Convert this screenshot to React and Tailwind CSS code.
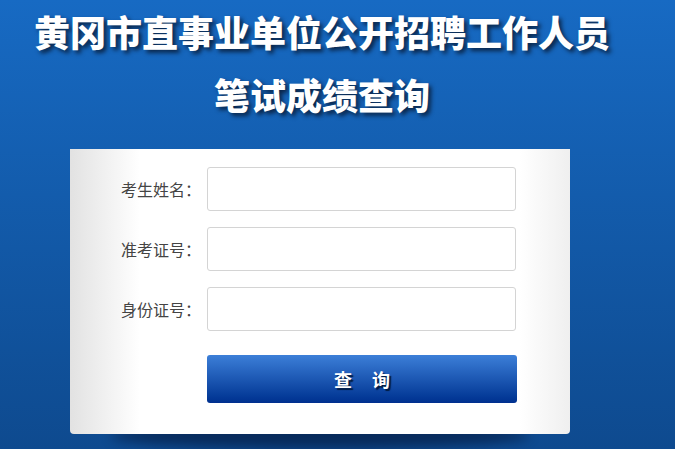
import React from 'react';

const fields = ['考生姓名：', '准考证号：', '身份证号：'];

export default function App() {
  return (
    <div
      className="relative w-[675px] h-[449px] overflow-hidden bg-gradient-to-b from-[#176ac3] to-[#0e4a8f]"
      style={{ fontFamily: '"Noto Sans CJK SC", "Noto Sans", sans-serif' }}
    >
      {/* heading */}
      <div className="w-[644px] pt-0 text-center text-white font-black text-[36px] leading-[63px] [text-shadow:3px_3px_4px_#0a2548]">
        <h1>黄冈市直事业单位公开招聘工作人员</h1>
        <h2>笔试成绩查询</h2>
      </div>

      {/* card */}
      <div className="relative ml-[70px] mt-[23px] w-[500px]">
        <div className="absolute left-[40px] right-[40px] -bottom-[14px] h-[24px] rounded-[50%] bg-[#06224d] blur-[6px] opacity-80" />
        <div className="relative h-[285px] rounded-b-[4px] bg-[linear-gradient(to_right,#e2e2e2,#ffffff_14%,#ffffff_90%,#efefef)] pt-[18px]">
          <div className="flex flex-col gap-[16px]">
            {fields.map((f) => (
              <div key={f} className="flex items-center">
                <label className="w-[137px] pr-[6px] text-right text-[16px] text-[#444]">{f}</label>
                <input className="w-[309px] h-[44px] rounded-[3px] border border-[#d4d4d4] bg-white outline-none" />
              </div>
            ))}
          </div>
          <button className="ml-[137px] mt-[24px] w-[310px] h-[48px] rounded-[3px] bg-gradient-to-b from-[#3c7fd8] to-[#00308f] text-white font-bold text-[18px] tracking-[20px] pl-[20px] [text-shadow:2px_2px_1px_#001a40]">
            查询
          </button>
        </div>
      </div>
    </div>
  );
}
